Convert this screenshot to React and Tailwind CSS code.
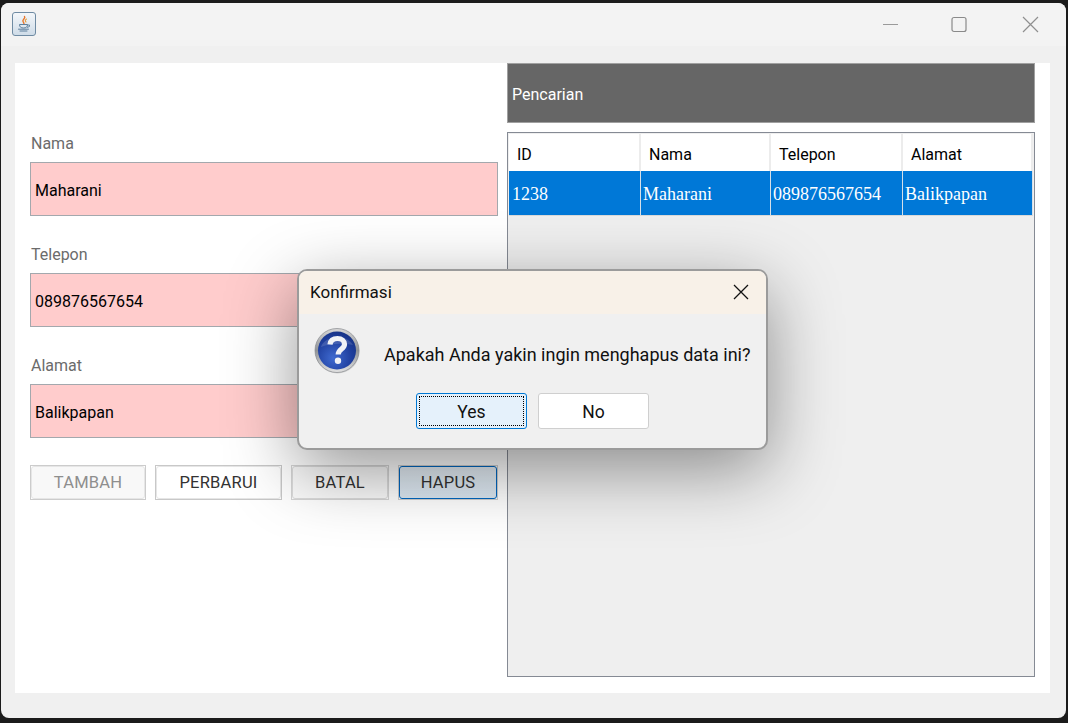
import React from "react";

const sans = "font-['Roboto','Noto_Sans',sans-serif]";

function JavaIcon() {
  return (
    <div className="w-[24px] h-[24px] rounded-[3px] border border-[#6f8ba3] bg-gradient-to-b from-[#f4f7fa] to-[#cfdce8] flex items-center justify-center">
      <svg width="18" height="18" viewBox="0 0 18 18" fill="none">
        <path d="M9.5 1.5C11 3.5 7 4.5 8 6.5C8.5 7.5 9 8 9 9" stroke="#e8762c" strokeWidth="1.4" strokeLinecap="round" />
        <path d="M11.5 4C10 5 10 6 11 7" stroke="#e8a03c" strokeWidth="1.1" strokeLinecap="round" />
        <path d="M4.5 9.5H12.5C12.5 12 11 13 8.5 13C6 13 4.5 12 4.5 9.5Z" stroke="#5d7f9c" strokeWidth="1" />
        <path d="M12.5 10H14.5V11.5L12 12.5" stroke="#5d7f9c" strokeWidth="0.9" />
        <path d="M3.5 14.2H13.5M5 16H12" stroke="#5d7f9c" strokeWidth="1" strokeLinecap="round" />
      </svg>
    </div>
  );
}

function QuestionIcon() {
  return (
    <svg width="48" height="48" viewBox="0 0 48 48">
      <defs>
        <radialGradient id="blueball" cx="0.4" cy="0.7" r="0.8">
          <stop offset="0" stopColor="#3f6ad0" />
          <stop offset="0.6" stopColor="#1f3f9e" />
          <stop offset="1" stopColor="#142f80" />
        </radialGradient>
        <linearGradient id="ring" x1="0" y1="0" x2="0" y2="1">
          <stop offset="0" stopColor="#d8d8d8" />
          <stop offset="0.5" stopColor="#8f9296" />
          <stop offset="1" stopColor="#e4e4e4" />
        </linearGradient>
      </defs>
      <circle cx="23.5" cy="24.5" r="22" fill="#000" opacity="0.12" />
      <circle cx="23" cy="23.5" r="22" fill="url(#ring)" stroke="#85888c" strokeWidth="0.7" />
      <circle cx="23" cy="23.5" r="19" fill="url(#blueball)" />
      <path d="M7 20C10 9 32 6 39 18C30 16 16 16 7 20Z" fill="#fff" opacity="0.14" />
      <path d="M16 17.5C16.5 13.5 19.5 11.5 23.5 11.5C27.8 11.5 30.5 14 30.5 17.2C30.5 22 24.2 22 24.2 27.5" stroke="#f0f2f6" strokeWidth="5.2" fill="none" />
      <circle cx="24" cy="33.8" r="3.2" fill="#f0f2f6" />
    </svg>
  );
}

function Field({ label, value, mt }) {
  return (
    <div className={`flex flex-col ${mt}`}>
      <div className="h-[20px] pl-[1px] pt-[1px] text-[16px] leading-[20px] text-[#6b6b6b]">{label}</div>
      <div className="mt-[9px] h-[54px] border border-[#a3a8ad] bg-[#ffcccc] pl-[4px] pt-[4px] flex items-center text-[16px] text-black">
        {value}
      </div>
    </div>
  );
}

function ActionButton({ w, outer, inner, text, children }) {
  return (
    <div className={`${w} h-[35px] border ${outer} flex`}>
      <div className={`flex-1 rounded-[3px] border ${inner} pt-[2px] flex items-center justify-center text-[16.5px] tracking-[0.2px] ${text}`}>
        {children}
      </div>
    </div>
  );
}

const columns = [
  { head: "ID", cell: "1238", w: "w-[132px]", pad: "pl-[3px]" },
  { head: "Nama", cell: "Maharani", w: "w-[130px]", pad: "pl-[2px]" },
  { head: "Telepon", cell: "089876567654", w: "w-[132px]", pad: "pl-[2px]" },
  { head: "Alamat", cell: "Balikpapan", w: "w-[130px]", pad: "pl-[2px]" },
];

export default function App() {
  return (
    <div className={`relative w-[1068px] h-[723px] bg-[#1b1b1b] pt-[3px] pl-[1px] pr-[2px] pb-[5px] overflow-hidden ${sans}`}>
      <div className="h-full rounded-[8px] bg-[#f0f0f0] flex flex-col overflow-hidden">
        {/* title bar */}
        <div className="h-[43px] shrink-0 bg-[#f3f3f3] flex items-start justify-between pl-[11px] pr-[27px] pt-[9px]">
          <JavaIcon />
          <div className="flex items-center gap-[53px] pt-[4px]">
            <svg width="16" height="17" viewBox="0 0 16 17">
              <path d="M1 8.5H16" stroke="#9a9a9a" strokeWidth="1" />
            </svg>
            <svg width="16" height="17" viewBox="0 0 16 17">
              <rect x="1" y="1.5" width="14" height="14" rx="2" fill="none" stroke="#8a8a8a" strokeWidth="1.2" />
            </svg>
            <svg width="17" height="17" viewBox="0 0 17 17" className="ml-[2px]">
              <path d="M1 1L16 16M16 1L1 16" stroke="#8f8f8f" strokeWidth="1.2" />
            </svg>
          </div>
        </div>

        {/* content */}
        <div className="flex-1 pt-[17px] pl-[14px] pr-[16px] pb-[25px] flex flex-col">
          <div className="flex-1 bg-white pl-[15px] pr-[15px] pb-[16px] flex gap-[9px]">
            {/* left form */}
            <div className="w-[468px] shrink-0 pt-[70px] flex flex-col">
              <Field label="Nama" value="Maharani" mt="" />
              <Field label="Telepon" value="089876567654" mt="mt-[28px]" />
              <Field label="Alamat" value="Balikpapan" mt="mt-[28px]" />
              <div className="mt-[27px] flex gap-[9px]">
                <ActionButton w="w-[116px]" outer="border-[#cccccc]" inner="border-[#e6e6e6] bg-[#f8f8f8]" text="text-[#8e8e8e]">TAMBAH</ActionButton>
                <ActionButton w="w-[127px]" outer="border-[#c8c8c8]" inner="border-[#e6e6e6] bg-white" text="text-[#333]">PERBARUI</ActionButton>
                <ActionButton w="w-[98px]" outer="border-[#d6d6d6]" inner="border-[#dcdcdc] bg-[#fbfbfb]" text="text-[#333]">BATAL</ActionButton>
                <ActionButton w="w-[100px]" outer="border-[#d0d0d0]" inner="border-[#0067c0] bg-gradient-to-b from-[#e6eff7] to-[#dce8f2]" text="text-[#333]">HAPUS</ActionButton>
              </div>
            </div>

            {/* right column */}
            <div className="flex-1 flex flex-col gap-[9px]">
              <div className="h-[60px] border border-[#a0a0a0] bg-[#666666] pl-[4px] pt-[3px] flex items-center text-[16px] text-white">Pencarian</div>
              <div className="flex-1 border border-[#858a94] bg-[#efefef] p-[1px] flex flex-col">
                <div className="flex h-[37px] bg-white">
                  {columns.map((c) => (
                    <div key={c.head} className={`${c.w} border-r-2 border-[#ececec] pl-[8px] pt-[4px] flex items-center text-[16px] text-black`}>{c.head}</div>
                  ))}
                </div>
                <div className="flex h-[45px] border-b border-[#d9d9d9]">
                  {columns.map((c) => (
                    <div key={c.head} className={`${c.w} ${c.pad} bg-[#0078d7] border-r border-[#d5dfe8] pt-[3px] flex items-center text-[18px] text-white font-['Liberation_Serif',serif]`}>{c.cell}</div>
                  ))}
                </div>
              </div>
            </div>
          </div>
        </div>
      </div>

      {/* dialog */}
      <div className="absolute left-[297px] top-[269px] w-[471px] h-[181px] rounded-[10px] border-2 border-[#9b9b9b] bg-[#f0f0f0] shadow-[0_20px_70px_rgba(0,0,0,0.42)] overflow-hidden flex flex-col">
        <div className="h-[43px] shrink-0 bg-[#f8f1e8] flex items-center justify-between pl-[11px] pr-[17px]">
          <span className="text-[17px] text-[#111]">Konfirmasi</span>
          <svg width="16" height="16" viewBox="0 0 16 16" className="mb-[2px]">
            <path d="M1 1L15 15M15 1L1 15" stroke="#111" strokeWidth="1.3" />
          </svg>
        </div>
        <div className="flex-1 flex flex-col">
          <div className="flex items-start pl-[15px] pt-[13px]">
            <QuestionIcon />
            <span className="ml-[22px] mt-[16px] text-[18px] leading-[24px] text-[#111] whitespace-nowrap">Apakah Anda yakin ingin menghapus data ini?</span>
          </div>
          <div className="mt-[18px] flex justify-center gap-[11px]">
            <div className="w-[111px] h-[36px] rounded-[3px] border border-[#0078d4] bg-[#e5f1fb] p-[2px] flex">
              <div className="flex-1 border border-dotted border-black pt-[2px] flex items-center justify-center text-[17.5px] text-[#111]">Yes</div>
            </div>
            <div className="w-[111px] h-[36px] rounded-[3px] border border-[#cfcfcf] bg-white pt-[2px] flex items-center justify-center text-[17.5px] text-[#111]">No</div>
          </div>
        </div>
      </div>
    </div>
  );
}
